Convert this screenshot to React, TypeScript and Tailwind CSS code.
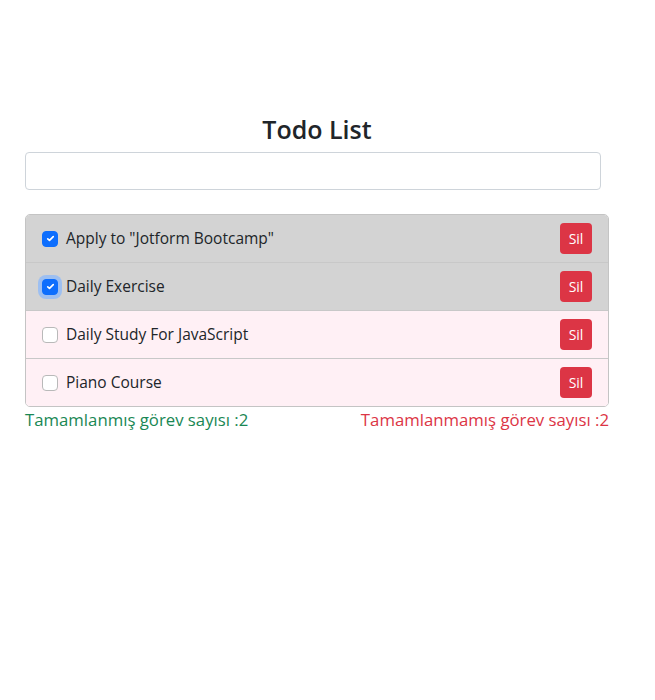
import { useState } from 'react';

interface Todo {
  id: number;
  text: string;
  done: boolean;
}

const initialTodos: Todo[] = [
  { id: 1, text: 'Apply to "Jotform Bootcamp"', done: true },
  { id: 2, text: 'Daily Exercise', done: true },
  { id: 3, text: 'Daily Study For JavaScript', done: false },
  { id: 4, text: 'Piano Course', done: false },
];

export default function App() {
  const [todos, setTodos] = useState<Todo[]>(initialTodos);
  const [input, setInput] = useState('');

  const toggle = (id: number) => {
    setTodos(todos.map((t) => (t.id === id ? { ...t, done: !t.done } : t)));
  };

  const remove = (id: number) => {
    setTodos(todos.filter((t) => t.id !== id));
  };

  const doneCount = todos.filter((t) => t.done).length;

  return (
    <div
      className="min-h-screen bg-white text-[#212529]"
      style={{ fontFamily: '"Open Sans", "Noto Sans", sans-serif' }}
    >
      <div className="w-[584px] ml-[25px] pt-[112px]">
        <h3 className="text-center text-[25px] font-semibold leading-[34px] mb-[6px]">Todo List</h3>
        <form
          onSubmit={(e) => {
            e.preventDefault();
            if (!input.trim()) return;
            setTodos([...todos, { id: Date.now(), text: input, done: false }]);
            setInput('');
          }}
        >
          <input
            value={input}
            onChange={(e) => setInput(e.target.value)}
            className="block w-[576px] h-[38px] px-3 border border-[#ced4da] rounded-[4px] text-base outline-none"
          />
        </form>

        <ul className="mt-[24px] border border-[#c4c4c4] rounded-[5px] overflow-hidden divide-y divide-[#c8c8c8]">
          {todos.map((todo) => (
            <li
              key={todo.id}
              className={
                'box-content flex items-center h-[47px] pl-[16px] pr-[16px] ' +
                (todo.done ? 'bg-[#d3d3d3]' : 'bg-[#fff0f5]')
              }
            >
              <label className="flex items-center gap-[8px] flex-1 text-[15.5px]">
                <span
                  onClick={() => toggle(todo.id)}
                  className={
                    'flex items-center justify-center w-[16px] h-[16px] rounded-[4px] border ' +
                    (todo.done ? 'bg-[#0d6efd] border-[#0d6efd] ' : 'bg-white border-[#b9b9b9] ') +
                    (todo.id === 2 ? 'ring-4 ring-[#86b7fe]/70' : '')
                  }
                >
                  {todo.done && (
                    <svg width="11" height="11" viewBox="0 0 20 20" fill="none">
                      <path d="M5 10.5l3.2 3L15 6.5" stroke="#fff" strokeWidth="3" strokeLinecap="round" strokeLinejoin="round" />
                    </svg>
                  )}
                </span>
                <span>{todo.text}</span>
              </label>
              <button
                onClick={() => remove(todo.id)}
                className="h-[31px] w-[32px] rounded-[4px] bg-[#dc3545] text-white text-[14px] leading-none"
              >
                Sil
              </button>
            </li>
          ))}
        </ul>

        <div className="flex justify-between text-[16.75px] leading-[26px]">
          <span className="text-[#198754]">Tamamlanmış görev sayısı :{doneCount}</span>
          <span className="text-[#dc3545]">Tamamlanmamış görev sayısı :{todos.length - doneCount}</span>
        </div>
      </div>
    </div>
  );
}
